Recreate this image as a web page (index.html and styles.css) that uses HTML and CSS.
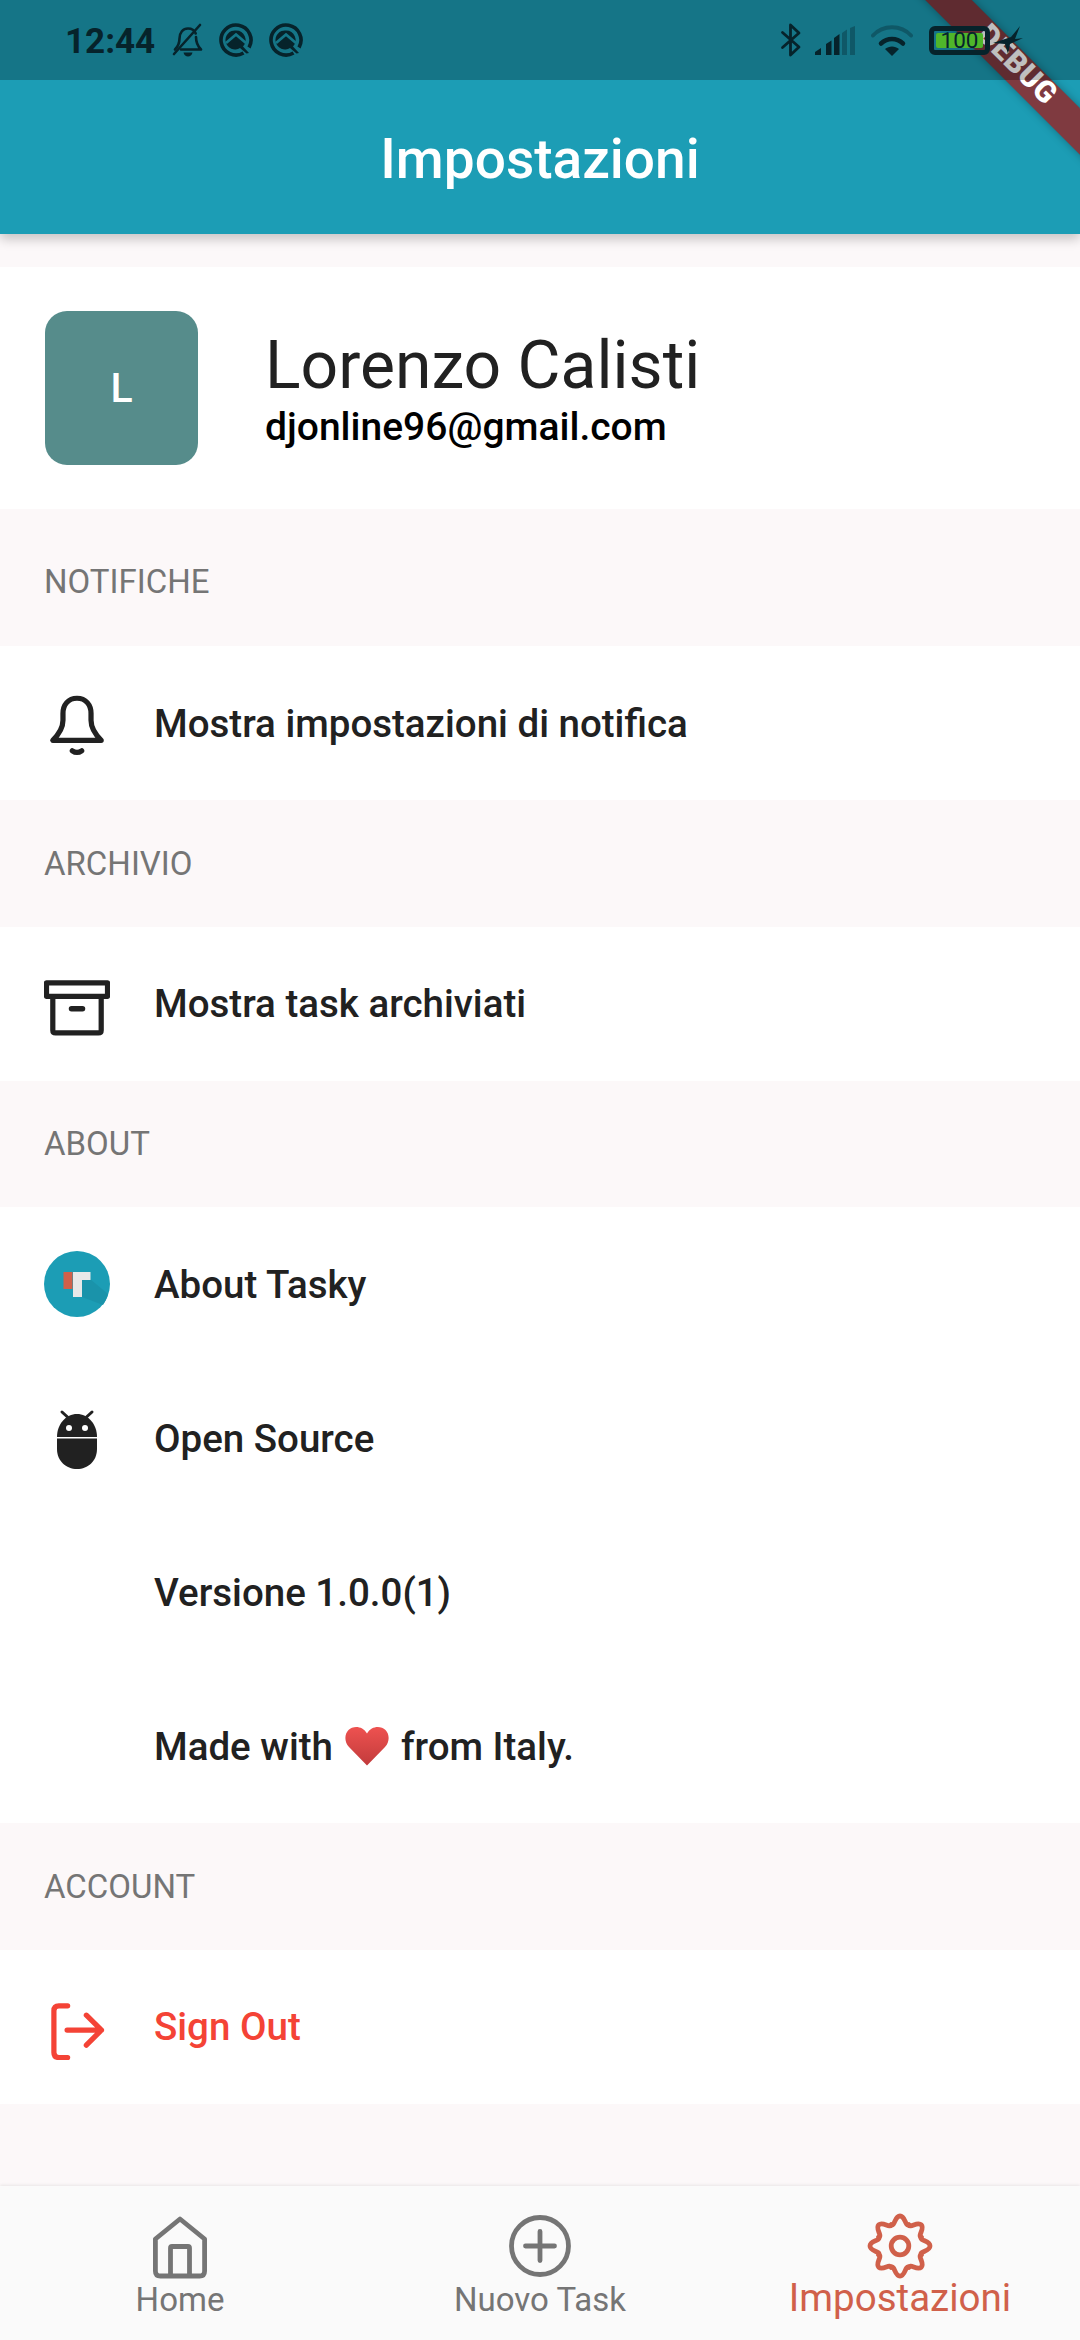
FILE: index.html
```html
<!DOCTYPE html>
<html lang="it">
<head>
<meta charset="UTF-8">
<meta name="viewport" content="width=device-width, initial-scale=1.0">
<title>Impostazioni</title>
<link rel="stylesheet" href="styles.css">
</head>
<body>
<div class="page">
    <header class="app-bar">
        <h1>Impostazioni</h1>
    </header>

    <div class="debug-ribbon"><span>DEBUG</span></div>

    <div class="status-bar">
        <span class="clock">12:44</span>
        <svg class="st-bell" viewBox="0 0 32 34"><path d="M3 26.500c3-3 4.500-6 4.500-11 0-6 3.500-10 8.500-10 4 0 6.500 2 7.700 5M24 14c0 5.500 1.500 9 5 12.500H9" fill="none" stroke="#06232b" stroke-width="2.600" stroke-linecap="round" stroke-linejoin="round"/><path d="M2 31 28 2" stroke="#06232b" stroke-width="2.600" stroke-linecap="round"/><path d="M11.500 29.500h9c-.5 2.500-2.500 4-4.500 4s-4-1.500-4.500-4z" fill="#06232b"/></svg>
        <svg class="st-ring" viewBox="0 0 34 34"><use href="#ring-icon"/></svg>
        <svg class="st-ring" viewBox="0 0 34 34"><use href="#ring-icon"/></svg>
        <span class="status-gap"></span>
        <svg class="st-bt" viewBox="0 0 22 34"><path d="M2.500 9.500 19 24l-8.500 8V2L19 10 2.500 24.500" fill="none" stroke="#06232b" stroke-width="2.800" stroke-linecap="round" stroke-linejoin="round"/></svg>
        <svg class="st-signal" viewBox="0 0 40 29"><path d="M0 29v-3l6-4v7z" fill="#06232b"/><path d="M11 29V18l5.500-3.500V29zM19 29V12l5.500-4v21z" fill="#06232b"/><path d="M27 29V7l5-3.500V29zM35 29V2l5-2v29z" fill="#06232b" opacity=".35"/></svg>
        <svg class="st-wifi" viewBox="0 0 42 31"><path d="M2 10.500C12-.5 30-.5 40 10.500" fill="none" stroke="#06232b" stroke-opacity=".35" stroke-width="4" stroke-linecap="round"/><path d="M10 18.500c6.500-6 15.500-6 22 0" fill="none" stroke="#06232b" stroke-width="4.500" stroke-linecap="round"/><path d="M21 31l-7-7c4-3.500 10-3.500 14 0z" fill="#06232b"/></svg>
        <div class="st-battery"><span>100</span></div>
        <svg class="st-bolt" viewBox="0 0 30 28"><path d="M0 17 18 11 27 0 22 13 30 12 17 18 15 28 12 18z" fill="#06232b"/></svg>
    </div>

    <main class="content">
        <section class="profile">
            <div class="avatar">L</div>
            <div class="profile-text">
                <div class="profile-name">Lorenzo Calisti</div>
                <div class="profile-mail">djonline96@gmail.com</div>
            </div>
        </section>

        <div class="section-label section-label-first">NOTIFICHE</div>
        <div class="row">
            <svg class="row-icon" viewBox="0 0 24 24"><path d="M12 3C8.800 3 6.900 5.400 6.900 8.500V11c0 3-1.400 5-3.700 7.300h17.600C18.500 16 17.100 14 17.100 11V8.500C17.100 5.400 15.200 3 12 3z" fill="none" stroke="#212121" stroke-width="1.900" stroke-linejoin="round"/><path d="M10.300 22.100q1.700 1.200 3.400 0" fill="none" stroke="#212121" stroke-width="1.900" stroke-linecap="round"/></svg>
            <span>Mostra impostazioni di notifica</span>
        </div>

        <div class="section-label">ARCHIVIO</div>
        <div class="row">
            <svg class="row-icon" viewBox="0 0 24 24"><path d="M.9 4.300h22.200v4.900H.9zM3.200 9.200v12.300q0 1 1 1h15.600q1 0 1-1V9.200" fill="none" stroke="#212121" stroke-width="1.900" stroke-linejoin="round"/><path d="M10 13.700h4" stroke="#212121" stroke-width="2" stroke-linecap="round"/></svg>
            <span>Mostra task archiviati</span>
        </div>

        <div class="section-label">ABOUT</div>
        <div class="row">
            <svg class="row-icon" viewBox="0 0 66 66"><circle cx="33" cy="33" r="33" fill="#1c9db5"/><path d="M28 28 38 46 59 54A33 33 0 0 0 64 43L46 28z" fill="#1a93aa"/><rect x="19.500" y="21" width="9" height="17" fill="#d0604a"/><rect x="29" y="21" width="9" height="25" fill="#e8e8e8"/><rect x="38" y="21" width="8.500" height="8" fill="#e8e8e8"/></svg>
            <span>About Tasky</span>
        </div>
        <div class="row">
            <svg class="row-icon" viewBox="0 0 66 66"><path d="M13 32c0-13 9-23 20-23s20 10 20 23z" fill="#212121"/><path d="M13 33.500h40V44c0 12-9 20-20 20s-20-8-20-20z" fill="#212121"/><path d="M18 7 23.500 12M48 7 42.500 12" stroke="#212121" stroke-width="3" stroke-linecap="round"/><circle cx="25" cy="23" r="3" fill="#fff"/><circle cx="41" cy="23" r="3" fill="#fff"/></svg>
            <span>Open Source</span>
        </div>
        <div class="row row-plain"><span>Versione 1.0.0(1)</span></div>
        <div class="row row-plain">
            <span>Made with</span>
            <svg class="heart" viewBox="0 0 44 40"><defs><linearGradient id="heart-fill" x1="0" y1="0" x2="0" y2="1"><stop offset="0" stop-color="#ee5250"/><stop offset="1" stop-color="#c23b3c"/></linearGradient></defs><path d="M22 39.500 4 21C-1 15.500-.5 8 3.500 4c4.500-4.500 14-4.500 18.500 3.500C26.500-.5 36-.5 40.500 4c4 4 4.500 11.500-.5 17z" fill="url(#heart-fill)"/></svg>
            <span>from Italy.</span>
        </div>

        <div class="section-label">ACCOUNT</div>
        <div class="row row-danger">
            <svg class="row-icon" viewBox="0 0 24 24"><path d="M8.600 4.300H5.400q-1.800 0-1.800 1.800v15.200q0 1.800 1.800 1.800h3.200" fill="none" stroke="#f44336" stroke-width="1.900" stroke-linecap="round"/><path d="M8.400 13.100h12.500M15.400 7.700l5.500 5.400-5.500 5.500" fill="none" stroke="#f44336" stroke-width="1.900" stroke-linecap="round" stroke-linejoin="round"/></svg>
            <span>Sign Out</span>
        </div>
    </main>

    <nav class="bottom-nav">
        <div class="nav-item">
            <svg viewBox="0 0 66 66"><path d="M8.400 26 33 6l24.600 20v32q0 5-5 5H13.400q-5 0-5-5z" fill="none" stroke="#757575" stroke-width="4.800" stroke-linejoin="round"/><path d="M23.500 63V35q0-1.500 1.500-1.500h16q1.500 0 1.500 1.500v28" fill="none" stroke="#757575" stroke-width="4.800"/></svg>
            <span>Home</span>
        </div>
        <div class="nav-item">
            <svg viewBox="0 0 66 66"><circle cx="33" cy="33" r="28.500" fill="none" stroke="#757575" stroke-width="4.800"/><path d="M33 18.500v29M18.500 33h29" stroke="#757575" stroke-width="4.800" stroke-linecap="round"/></svg>
            <span>Nuovo Task</span>
        </div>
        <div class="nav-item nav-item-active">
            <svg viewBox="0 0 66 66" fill="none" stroke="#d0604a" stroke-width="4.800" stroke-linecap="round">
                <defs><path id="gear-lobe" d="M24.200 11.800C28 13.500 27.500 3 33 3s5 10.500 8.800 8.800"/></defs>
                <use href="#gear-lobe"/>
                <use href="#gear-lobe" transform="rotate(45 33 33)"/>
                <use href="#gear-lobe" transform="rotate(90 33 33)"/>
                <use href="#gear-lobe" transform="rotate(135 33 33)"/>
                <use href="#gear-lobe" transform="rotate(180 33 33)"/>
                <use href="#gear-lobe" transform="rotate(225 33 33)"/>
                <use href="#gear-lobe" transform="rotate(270 33 33)"/>
                <use href="#gear-lobe" transform="rotate(315 33 33)"/>
                <circle cx="33" cy="33" r="8.800"/>
            </svg>
            <span>Impostazioni</span>
        </div>
    </nav>
</div>

<svg class="icon-defs" width="0" height="0">
    <defs>
        <g id="ring-icon">
            <path d="M24.500 30A15 15 0 1 1 30 24.500" fill="none" stroke="#06232b" stroke-width="3.600"/>
            <path d="M17 7.500A9.500 9.500 0 0 1 24 23.500L30 30 27.500 30.500 21 25A9.500 9.500 0 1 1 17 7.500z" fill="#06232b"/>
            <path d="M7 20 17 11.500 27 20" fill="none" stroke="#157688" stroke-width="2.800"/>
        </g>
    </defs>
</svg>
</body>
</html>
```

FILE: styles.css
```css
* {
    box-sizing: border-box;
}
body {
    margin: 0;
    font-family: Roboto, sans-serif;
    color: #212121;
}
.page {
    position: relative;
    width: 1080px;
    height: 2340px;
    overflow: hidden;
    display: flex;
    flex-direction: column;
    background-color: #fcf8f9;
}
.icon-defs {
    position: absolute;
}

/* app bar, status bar and debug ribbon */
.app-bar {
    height: 234px;
    padding-top: 83px;
    display: flex;
    align-items: center;
    justify-content: center;
    background-color: #1c9db5;
    box-shadow: 0 5px 11px rgba(0, 0, 0, 0.22);
    position: relative;
    z-index: 1;
}
.app-bar h1 {
    margin: 0;
    font-size: 55px;
    font-weight: 500;
    color: #fff;
}
.debug-ribbon {
    position: absolute;
    left: 818px;
    top: 53px;
    width: 400px;
    height: 33px;
    display: flex;
    align-items: center;
    justify-content: center;
    background-color: rgba(160, 25, 25, 0.75);
    box-shadow: 0 0 8px rgba(0, 0, 0, 0.3);
    transform: rotate(45deg);
    z-index: 2;
}
.debug-ribbon span {
    margin-bottom: 8px;
    margin-right: 8px;
    font-size: 30px;
    font-weight: 900;
    letter-spacing: 0.5px;
    color: #fff;
}
.status-bar {
    position: absolute;
    left: 0;
    top: 0;
    width: 100%;
    height: 80px;
    padding-left: 65px;
    display: flex;
    align-items: center;
    background-color: rgba(0, 0, 0, 0.25);
    z-index: 3;
}
.clock {
    font-size: 35px;
    font-weight: 700;
    color: #06232b;
    width: 107px;
    margin-top: 2px;
}
.st-bell {
    width: 32px;
    height: 34px;
    margin-right: 15px;
}
.st-ring {
    width: 34px;
    height: 34px;
    margin-right: 16px;
}
.status-gap {
    flex: 1;
}
.st-bt {
    width: 22px;
    height: 34px;
    margin-right: 13px;
}
.st-signal {
    width: 40px;
    height: 29px;
    margin-right: 16px;
}
.st-wifi {
    width: 42px;
    height: 31px;
    margin-right: 16px;
}
.st-battery {
    width: 61px;
    height: 29px;
    border: 5px solid #06232b;
    border-radius: 6px;
    padding: 2px;
    display: flex;
    align-items: center;
    justify-content: center;
    margin-right: 3px;
}
.st-battery span {
    width: 100%;
    height: 15px;
    line-height: 15px;
    border-radius: 2px;
    background-color: #4fb72a;
    font-size: 22.500px;
    text-align: center;
    color: #06232b;
}
.st-bolt {
    width: 30px;
    height: 28px;
    margin-right: 57px;
}

/* list */
.content {
    flex: 1;
    padding-top: 33px;
}
.profile {
    height: 242px;
    padding-left: 45px;
    display: flex;
    align-items: center;
    background-color: #fff;
}
.avatar {
    width: 153px;
    height: 154px;
    border-radius: 22px;
    display: flex;
    align-items: center;
    justify-content: center;
    background-color: #568c8b;
    font-size: 41px;
    font-weight: 500;
    color: #fff;
}
.profile-text {
    margin-left: 67px;
}
.profile-name {
    font-size: 66px;
    line-height: 76px;
    font-weight: 400;
}
.profile-mail {
    margin-top: 1px;
    font-size: 39px;
    line-height: 44px;
    font-weight: 500;
    color: #000;
}
.section-label {
    height: 126.500px;
    padding-left: 44px;
    display: flex;
    align-items: center;
    font-size: 33px;
    color: #757575;
}
.section-label-first {
    height: 137px;
    padding-top: 8px;
}
.row {
    height: 154px;
    padding-left: 44px;
    display: flex;
    align-items: center;
    background-color: #fff;
    font-size: 38.500px;
    font-weight: 500;
}
.row-plain {
    padding-left: 154px;
}
.row-icon {
    width: 66px;
    height: 66px;
    margin-right: 44px;
}
.row-danger {
    color: #f44336;
}
.heart {
    width: 44px;
    height: 40px;
    margin: 0 12px;
}

/* bottom navigation */
.bottom-nav {
    height: 154px;
    display: flex;
    background-color: #fafafa;
    box-shadow: 0 -1px 3px rgba(0, 0, 0, 0.08);
}
.nav-item {
    width: 360px;
    padding-top: 27px;
    display: flex;
    flex-direction: column;
    align-items: center;
    font-size: 33px;
    line-height: 38px;
    color: #757575;
}
.nav-item span {
    margin-top: 2px;
}
.nav-item svg {
    width: 66px;
    height: 66px;
}
.nav-item-active {
    font-size: 38.500px;
    line-height: 44px;
    color: #d0604a;
}
.nav-item-active span {
    margin-top: -3px;
}
```
